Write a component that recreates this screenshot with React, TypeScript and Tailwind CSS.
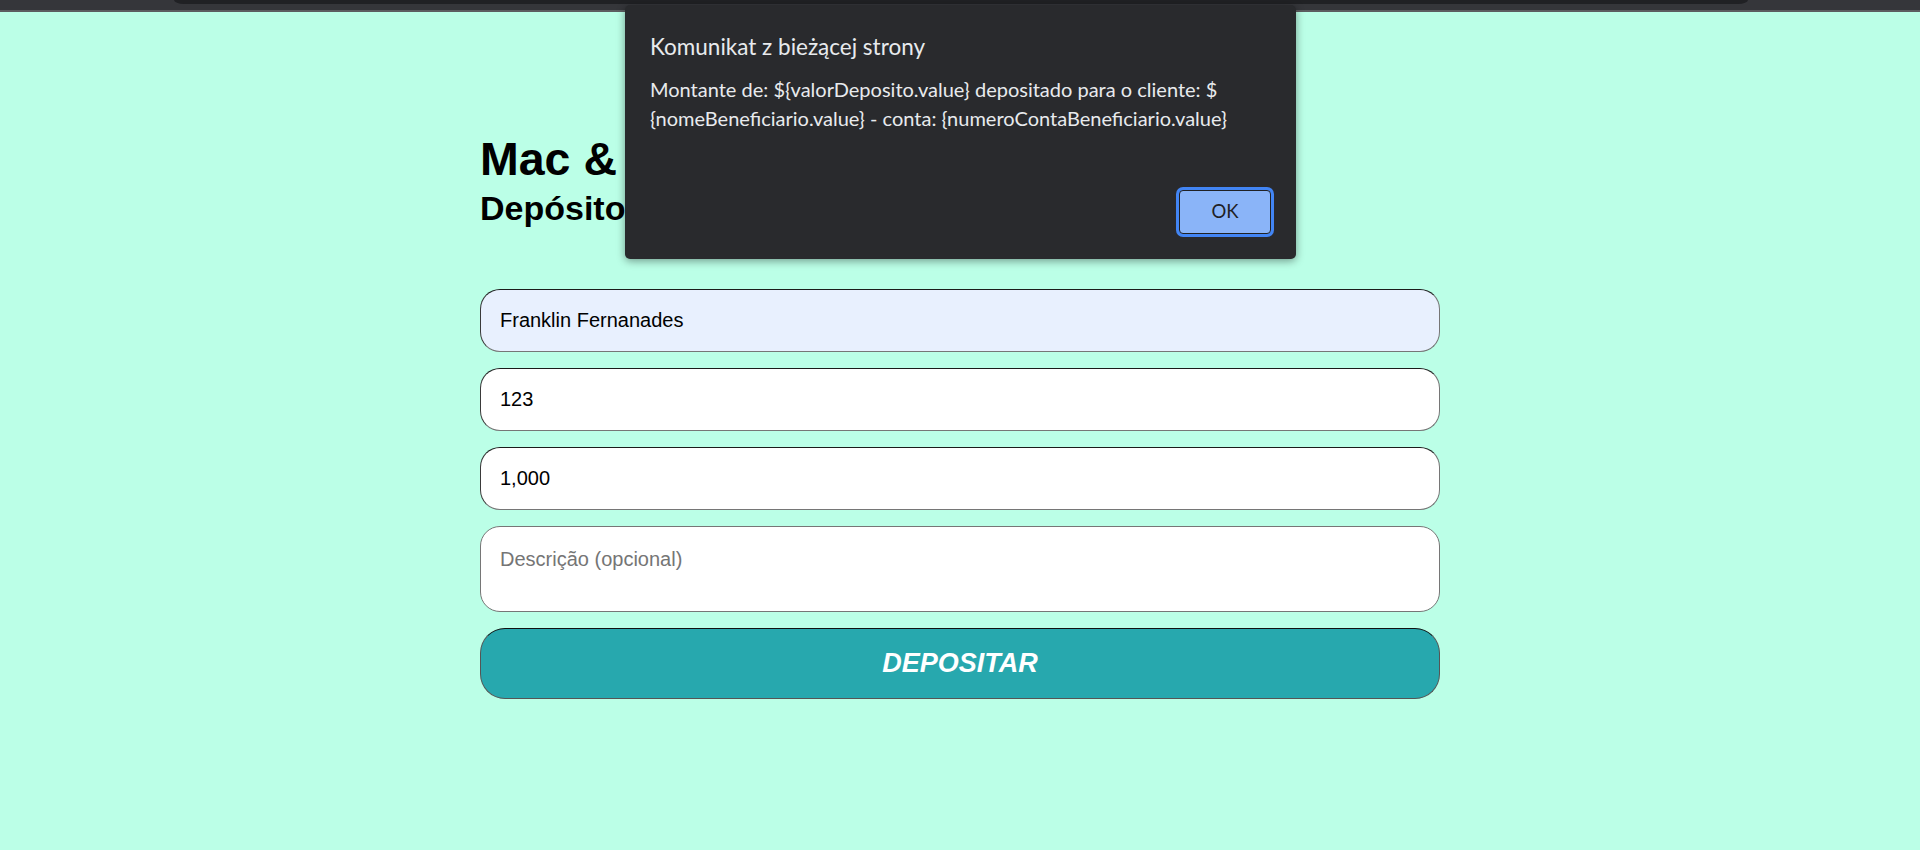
export default function App() {
  return (
    <div className="relative min-h-screen bg-[#bbffe7] font-['Liberation_Sans',Arial,sans-serif] text-black">
      {/* browser tab strip left at the top of the capture */}
      <div className="h-[10px] bg-[#35363a] pl-[174px] pr-[172px]">
        <div className="h-[4px] rounded-b-[10px_4px] bg-[#202124]" />
      </div>
      <div className="h-[2px] bg-[#5c5d60]" />

      <main className="mx-auto w-[960px] pt-[120px]">
        <h1 className="text-[46.5px] font-bold leading-[54px]">Mac &amp; Cheese Bank</h1>
        <h2 className="mt-[2px] text-[34px] font-bold leading-[40px]">Depósito bancário</h2>

        <form className="mt-[61px] flex flex-col gap-[16px]" onSubmit={(e) => e.preventDefault()}>
          <input
            type="text"
            readOnly
            defaultValue="Franklin Fernanades"
            className="h-[63px] rounded-[20px] border border-[#767676] border-t-[#1b1b1b] border-l-[#3a3a3a] bg-[#e8f0fe] px-[19px] text-[20px] outline-none"
          />
          <input
            type="text"
            readOnly
            defaultValue="123"
            className="h-[63px] rounded-[20px] border border-[#767676] border-t-[#1b1b1b] border-l-[#3a3a3a] bg-white px-[19px] text-[20px] outline-none"
          />
          <input
            type="text"
            readOnly
            defaultValue="1,000"
            className="h-[63px] rounded-[20px] border border-[#767676] border-t-[#1b1b1b] border-l-[#3a3a3a] bg-white px-[19px] text-[20px] outline-none"
          />
          <textarea
            placeholder="Descrição (opcional)"
            className="h-[86px] resize-none rounded-[20px] border border-[#767676] bg-white px-[19px] pt-[17px] text-[20px] outline-none placeholder:text-[#757575]"
          />
          <button
            type="submit"
            className="h-[71px] rounded-[25px] border border-[#555] border-t-[#111] bg-[#27a8ae] text-[27px] font-bold italic text-white"
          >
            DEPOSITAR
          </button>
        </form>
      </main>

      {/* alert dialog */}
      <div className="absolute left-[625px] top-[5px] flex h-[254px] w-[671px] flex-col rounded-[5px] bg-[#292a2d] px-[25px] pb-[25px] pt-[28px] font-['Lato',sans-serif] text-[#e8eaed] shadow-[0_2px_8px_rgba(0,0,0,0.4)]">
        <div className="text-[22.5px] leading-[28px]">Komunikat z bieżącej strony</div>
        <div className="mt-[14px] text-[20px] leading-[29px]">
          <div className="whitespace-nowrap">Montante de: ${"{valorDeposito.value}"} depositado para o cliente: $</div>
          <div className="whitespace-nowrap">{"{nomeBeneficiario.value}"} - conta: {"{numeroContaBeneficiario.value}"}</div>
        </div>
        <div className="flex-1" />
        <button className="h-[44px] w-[92px] self-end rounded-[4px] border border-[#202124] bg-[#8ab4f8] text-[18.5px] text-[#202124] ring-[3px] ring-[#4285f4]">
          OK
        </button>
      </div>
    </div>
  )
}
